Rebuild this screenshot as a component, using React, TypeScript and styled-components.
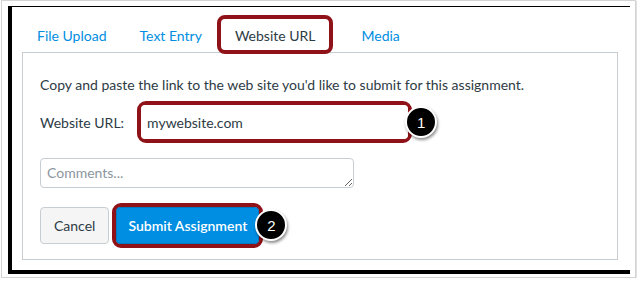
import React from "react";
import styled, { createGlobalStyle } from "styled-components";

const GlobalStyle = createGlobalStyle`
  html, body { margin: 0; padding: 0; background: #ffffff; }
  body { font-family: Lato, "Noto Sans", Arial, sans-serif; }
  * { box-sizing: border-box; }
`;

const INK = "#2d3b45";
const LINK = "#008ee2";
const RULE = "#c7cdd1";
const MARK = "#8e1218";

const Frame = styled.div`
  width: 635px;
  height: 278px;
  margin-left: 1px;
  border: 1px solid #d4d4d4;
  box-shadow: 1px 1px 1px rgba(0, 0, 0, 0.12);
  padding: 5px 0 0 6px;
  background: #fff;
`;

const Shot = styled.div`
  width: 622px;
  height: 268px;
  border-top: 1px solid #000;
  border-left: 4px solid #000;
  border-bottom: 4px solid #000;
  display: flex;
  flex-direction: column;
  background: #fff;
`;

const TabBar = styled.div`
  display: flex;
  align-items: flex-end;
  height: 45px;
  padding-left: 10px;
`;

const Tab = styled.div<{ $padL: number; $padR: number }>`
  height: 37px;
  display: flex;
  align-items: center;
  padding: 3px ${(p) => p.$padR}px 0 ${(p) => p.$padL}px;
  font-size: 14px;
  color: ${LINK};
  white-space: nowrap;
`;

const ActiveTab = styled.div`
  position: relative;
  z-index: 1;
  height: 39px;
  margin-bottom: -2px;
  display: flex;
  align-items: center;
  padding: 1px 14px 0 14px;
  font-size: 14px;
  color: ${INK};
  background: #fff;
  border: 4px solid ${MARK};
  border-radius: 8px;
  white-space: nowrap;
`;

const Panel = styled.div`
  margin: 0 12px 0 10px;
  height: 208px;
  border: 1px solid ${RULE};
  padding: 22px 17px 0 17px;
  display: flex;
  flex-direction: column;
  align-items: flex-start;
`;

const Intro = styled.p`
  margin: 0;
  font-size: 14px;
  line-height: 20px;
  color: ${INK};
`;

const UrlRow = styled.div`
  display: flex;
  align-items: center;
  margin-top: 6px;
  gap: 13px;
`;

const Label = styled.span`
  font-size: 14px;
  color: ${INK};
`;

const Highlight = styled.div`
  position: relative;
  border: 4px solid ${MARK};
  border-radius: 9px;
  display: flex;
`;

const UrlInput = styled.input`
  width: 267px;
  height: 34px;
  border: none;
  border-radius: 4px;
  padding: 0 6px;
  font-family: inherit;
  font-size: 14px;
  color: ${INK};
  background: #fff;
  outline: none;
`;

const Badge = styled.span<{ $x: number; $y: number }>`
  position: absolute;
  left: ${(p) => p.$x}px;
  top: ${(p) => p.$y}px;
  width: 32px;
  height: 32px;
  border-radius: 50%;
  background: #000;
  border: 2px solid #fff;
  box-shadow: 1px 2px 3px rgba(0, 0, 0, 0.45);
  color: #fff;
  font-family: "Liberation Sans", Arial, sans-serif;
  font-size: 15px;
  display: flex;
  align-items: center;
  justify-content: center;
`;

const Comments = styled.textarea`
  margin-top: 15px;
  width: 314px;
  height: 30px;
  border: 1px solid ${RULE};
  border-radius: 4px;
  padding: 5px 6px;
  font-family: inherit;
  font-size: 14px;
  color: ${INK};
  resize: vertical;
  &::placeholder {
    color: #8b969e;
  }
`;

const Actions = styled.div`
  display: flex;
  align-items: center;
  margin-top: 15px;
  gap: 3px;
`;

const Button = styled.button<{ $primary?: boolean }>`
  height: 37px;
  padding: 0 ${(p) => (p.$primary ? 11 : 13)}px;
  border-radius: 4px;
  font-family: inherit;
  font-size: 14px;
  font-weight: ${(p) => (p.$primary ? 600 : 400)};
  color: ${(p) => (p.$primary ? "#fff" : INK)};
  background: ${(p) => (p.$primary ? LINK : "#f5f5f5")};
  border: 1px solid ${(p) => (p.$primary ? "#0079c1" : RULE)};
  cursor: pointer;
`;

export default function App() {
  return (
    <>
      <GlobalStyle />
      <Frame>
        <Shot>
          <TabBar>
            <Tab $padL={15} $padR={16}>File Upload</Tab>
            <Tab $padL={17} $padR={15}>Text Entry</Tab>
            <ActiveTab>Website URL</ActiveTab>
            <Tab $padL={28} $padR={16}>Media</Tab>
          </TabBar>
          <Panel>
            <Intro>
              Copy and paste the link to the web site you'd like to submit for this assignment.
            </Intro>
            <UrlRow>
              <Label>Website URL:</Label>
              <Highlight>
                <UrlInput readOnly value="mywebsite.com" />
                <Badge $x={264} $y={1}>1</Badge>
              </Highlight>
            </UrlRow>
            <Comments placeholder="Comments..." />
            <Actions>
              <Button>Cancel</Button>
              <Highlight>
                <Button $primary>Submit Assignment</Button>
                <Badge $x={139} $y={2}>2</Badge>
              </Highlight>
            </Actions>
          </Panel>
        </Shot>
      </Frame>
    </>
  );
}
